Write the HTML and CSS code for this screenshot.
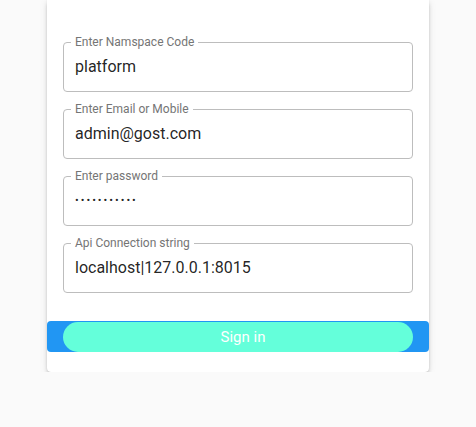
FILE: index.html
```html
<!DOCTYPE html>
<html>
<head>
<meta charset="utf-8">
<link rel="stylesheet" href="styles.css">
</head>
<body>
<div class="card">
  <form class="form">
    <fieldset class="field">
      <legend class="field-label">Enter Namspace Code</legend>
      <div class="field-value">platform</div>
    </fieldset>
    <fieldset class="field">
      <legend class="field-label">Enter Email or Mobile</legend>
      <div class="field-value">admin@gost.com</div>
    </fieldset>
    <fieldset class="field">
      <legend class="field-label">Enter password</legend>
      <div class="field-value password">•••••••••••</div>
    </fieldset>
    <fieldset class="field">
      <legend class="field-label">Api Connection string</legend>
      <div class="field-value">localhost|127.0.0.1:8015</div>
    </fieldset>
  </form>
  <div class="actions">
    <div class="pill">Sign in</div>
  </div>
</div>
</body>
</html>
```
FILE: styles.css
```css
html, body {
  margin: 0;
  padding: 0;
  background: #fafafa;
  font-family: Roboto, "Noto Sans", sans-serif;
}
.card {
  margin-left: 47px;
  width: 382px;
  background: #fff;
  border-radius: 0 0 4px 4px;
  box-shadow: 0 3px 4px -1px rgba(0,0,0,0.25), 0 1px 8px rgba(0,0,0,0.08), 0 0 1px rgba(0,0,0,0.15);
  padding-bottom: 20px;
}
.form {
  display: flex;
  flex-direction: column;
  gap: 10px;
  padding: 35px 16px 28px;
}
.field {
  margin: 0;
  padding: 0 11px;
  border: 1px solid #bdbdbd;
  border-radius: 4px;
  height: 57px;
  box-sizing: border-box;
}
.field-label {
  font-size: 12px;
  line-height: 14px;
  color: #757575;
  padding: 0 4px;
  margin-left: -4px;
}
.field-value {
  font-size: 16px;
  color: rgba(0,0,0,0.87);
  line-height: 20px;
  padding-top: 8px;
}
.password {
  font-size: 11px;
  letter-spacing: 2px;
}
.actions {
  background: #2196f3;
  border-radius: 4px;
  height: 31px;
  padding: 1px 16px 0;
  box-sizing: border-box;
}
.pill {
  height: 30px;
  border-radius: 15px;
  background: #64ffda;
  color: #fff;
  font-size: 15px;
  line-height: 30px;
  text-align: center;
  padding-left: 10px;
}
```
